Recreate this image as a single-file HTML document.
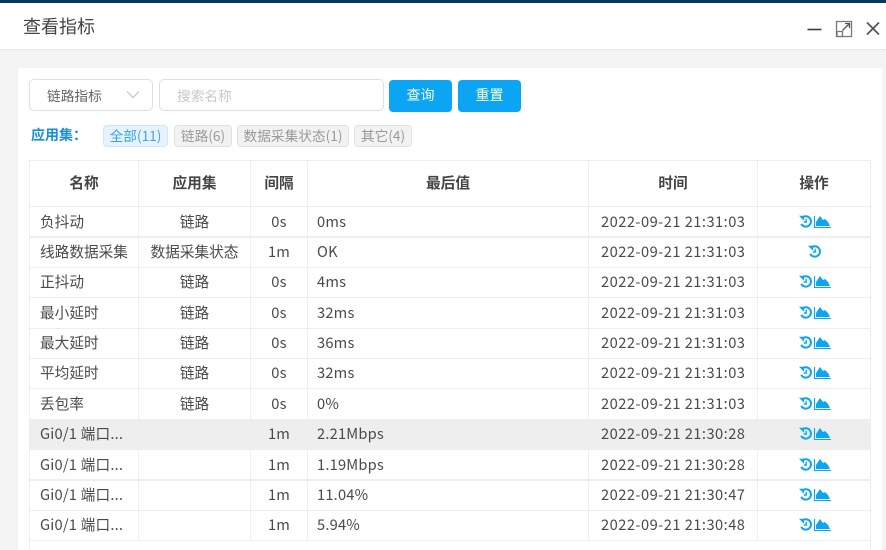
<!DOCTYPE html>
<html><head><meta charset="utf-8">
<style>
html,body{margin:0;padding:0}
body{width:886px;height:550px;overflow:hidden;position:relative;background:#f3f3f3;font-family:"Noto Sans CJK SC","Liberation Sans",sans-serif;color:#444}
.a{position:absolute}
.top{left:0;top:0;width:886px;height:3px;background:#033a5c}
.hd{left:0;top:3px;width:886px;height:46px;background:#fff;border-bottom:1px solid #e8e8e8}
.ti{left:23px;top:13px;font-size:18px;line-height:26px;color:#444}
.card{left:18px;top:68px;width:864px;height:482px;background:#fff}
.box{border:1px solid #dcdfe6;border-radius:5px;background:#fff;box-sizing:border-box}
.btn{background:#0ba5f3;border-radius:4px;color:#fff;font-size:14px;text-align:center;line-height:31px;width:63px;height:32px;top:80px}
.tag{top:125px;height:22px;line-height:18px;border:1px solid #e2e2e2;background:#f2f2f2;border-radius:4px;box-sizing:border-box;font-size:13.7px;color:#999;text-align:center;white-space:nowrap}
.h{background:#eee}
.t{white-space:nowrap;font-size:14.67px;line-height:20px;color:#4a4a4a}
.c{text-align:center}
.b{font-weight:700;font-size:14.67px;color:#444;margin-top:-1px}
.d{letter-spacing:.47px}
.v{letter-spacing:.2px}
svg{position:absolute;overflow:visible}
</style></head><body>
<div class="a top"></div>
<div class="a hd"></div>
<div class="a ti">查看指标</div>
<svg style="left:806px;top:20px" width="70" height="18" fill="none">
<path d="M1.500 9.500H15.500" stroke="#3a3a4a" stroke-width="1.600"/>
<path d="M30.500 1.500H45.500V16.500H30.500Z" stroke="#77777f" stroke-width="1.300"/>
<path d="M31 11.500H36.500V16.500H31Z" stroke="#77777f" stroke-width="1.300"/>
<path d="M36.500 10.500L43 4M39 3.500H43.500V8" stroke="#55555f" stroke-width="1.300"/>
<path d="M61 2.500L73 14.500M73 2.500L61 14.500" stroke="#55555f" stroke-width="1.800"/>
</svg>
<div class="a card"></div>
<div class="a box" style="left:29px;top:79px;width:124px;height:32px"></div>
<div class="a" style="left:47px;top:85px;font-size:13.7px;line-height:20px;color:#666">链路指标</div>
<svg style="left:126px;top:90px" width="14" height="10" fill="none"><path d="M1 1.500L7 7.500L13 1.500" stroke="#c0c4cc" stroke-width="1.200"/></svg>
<div class="a box" style="left:159px;top:79px;width:225px;height:32px"></div>
<div class="a" style="left:177px;top:85px;font-size:13.7px;line-height:20px;color:#c8c8c8">搜索名称</div>
<div class="a btn" style="left:389px">查询</div>
<div class="a btn" style="left:458px">重置</div>
<div class="a" style="left:31px;top:125px;font-size:14px;line-height:20px;font-weight:700;color:#1a8fd6">应用集：</div>
<div class="a tag" style="left:103px;width:65px;background:#e6f3fe;border-color:#cfe6fb;color:#3ba2f3">全部(11)</div>
<div class="a tag" style="left:174px;width:58px">链路(6)</div>
<div class="a tag" style="left:237px;width:112px">数据采集状态(1)</div>
<div class="a tag" style="left:354px;width:58px">其它(4)</div>

<!-- grid -->
<div class="a" style="left:30px;top:419px;width:840px;height:31px;background:#eee"></div>
<div class="a h" style="left:29px;top:160px;width:842px;height:1px"></div>
<div class="a h" style="left:29px;top:206px;width:842px;height:1px"></div>
<div class="a h" style="left:29px;top:236px;width:842px;height:2px"></div>
<div class="a h" style="left:29px;top:267px;width:842px;height:1px"></div>
<div class="a h" style="left:29px;top:297px;width:842px;height:1px"></div>
<div class="a h" style="left:29px;top:328px;width:842px;height:1px"></div>
<div class="a h" style="left:29px;top:358px;width:842px;height:1px"></div>
<div class="a h" style="left:29px;top:388px;width:842px;height:1px"></div>
<div class="a h" style="left:29px;top:479px;width:842px;height:2px"></div>
<div class="a h" style="left:29px;top:510px;width:842px;height:1px"></div>
<div class="a h" style="left:29px;top:540px;width:842px;height:1px"></div>
<div class="a h" style="left:29px;top:160px;width:1px;height:390px"></div>
<div class="a h" style="left:870px;top:160px;width:1px;height:390px"></div>
<div class="a h" style="left:138px;top:160px;width:1px;height:380px"></div>
<div class="a h" style="left:250px;top:160px;width:1px;height:380px"></div>
<div class="a h" style="left:307px;top:160px;width:1px;height:380px"></div>
<div class="a h" style="left:588px;top:160px;width:1px;height:380px"></div>
<div class="a h" style="left:757px;top:160px;width:1px;height:380px"></div>

<!-- header -->
<div class="a t c b" style="left:30px;width:108px;top:174px">名称</div>
<div class="a t c b" style="left:139px;width:111px;top:174px">应用集</div>
<div class="a t c b" style="left:251px;width:56px;top:174px">间隔</div>
<div class="a t c b" style="left:308px;width:280px;top:174px">最后值</div>
<div class="a t c b" style="left:589px;width:168px;top:174px">时间</div>
<div class="a t c b" style="left:758px;width:112px;top:174px">操作</div>

<!-- rows -->
<div class="a t" style="left:40px;top:212px">负抖动</div><div class="a t c" style="left:139px;width:111px;top:212px">链路</div><div class="a t c v" style="left:251px;width:56px;top:212px">0s</div><div class="a t v" style="left:317px;top:212px">0ms</div><div class="a t d" style="left:601px;top:212px">2022-09-21 21:31:03</div>
<div class="a t" style="left:40px;top:242px">线路数据采集</div><div class="a t c" style="left:139px;width:111px;top:242px">数据采集状态</div><div class="a t c v" style="left:251px;width:56px;top:242px">1m</div><div class="a t v" style="left:317px;top:242px">OK</div><div class="a t d" style="left:601px;top:242px">2022-09-21 21:31:03</div>
<div class="a t" style="left:40px;top:272px">正抖动</div><div class="a t c" style="left:139px;width:111px;top:272px">链路</div><div class="a t c v" style="left:251px;width:56px;top:272px">0s</div><div class="a t v" style="left:317px;top:272px">4ms</div><div class="a t d" style="left:601px;top:272px">2022-09-21 21:31:03</div>
<div class="a t" style="left:40px;top:303px">最小延时</div><div class="a t c" style="left:139px;width:111px;top:303px">链路</div><div class="a t c v" style="left:251px;width:56px;top:303px">0s</div><div class="a t v" style="left:317px;top:303px">32ms</div><div class="a t d" style="left:601px;top:303px">2022-09-21 21:31:03</div>
<div class="a t" style="left:40px;top:333px">最大延时</div><div class="a t c" style="left:139px;width:111px;top:333px">链路</div><div class="a t c v" style="left:251px;width:56px;top:333px">0s</div><div class="a t v" style="left:317px;top:333px">36ms</div><div class="a t d" style="left:601px;top:333px">2022-09-21 21:31:03</div>
<div class="a t" style="left:40px;top:363px">平均延时</div><div class="a t c" style="left:139px;width:111px;top:363px">链路</div><div class="a t c v" style="left:251px;width:56px;top:363px">0s</div><div class="a t v" style="left:317px;top:363px">32ms</div><div class="a t d" style="left:601px;top:363px">2022-09-21 21:31:03</div>
<div class="a t" style="left:40px;top:394px">丢包率</div><div class="a t c" style="left:139px;width:111px;top:394px">链路</div><div class="a t c v" style="left:251px;width:56px;top:394px">0s</div><div class="a t v" style="left:317px;top:394px">0%</div><div class="a t d" style="left:601px;top:394px">2022-09-21 21:31:03</div>
<div class="a t v" style="left:40px;top:424px">Gi0/1 端口...</div><div class="a t c v" style="left:251px;width:56px;top:424px">1m</div><div class="a t v" style="left:317px;top:424px">2.21Mbps</div><div class="a t d" style="left:601px;top:424px">2022-09-21 21:30:28</div>
<div class="a t v" style="left:40px;top:455px">Gi0/1 端口...</div><div class="a t c v" style="left:251px;width:56px;top:455px">1m</div><div class="a t v" style="left:317px;top:455px">1.19Mbps</div><div class="a t d" style="left:601px;top:455px">2022-09-21 21:30:28</div>
<div class="a t v" style="left:40px;top:485px">Gi0/1 端口...</div><div class="a t c v" style="left:251px;width:56px;top:485px">1m</div><div class="a t v" style="left:317px;top:485px">11.04%</div><div class="a t d" style="left:601px;top:485px">2022-09-21 21:30:47</div>
<div class="a t v" style="left:40px;top:515px">Gi0/1 端口...</div><div class="a t c v" style="left:251px;width:56px;top:515px">1m</div><div class="a t v" style="left:317px;top:515px">5.94%</div><div class="a t d" style="left:601px;top:515px">2022-09-21 21:30:48</div>

<!-- icons -->
<svg width="0" height="0" style="left:0;top:0"><defs>
<g id="hi" fill="none" stroke="#0ba5f3"><path d="M2.900 3A5.200 5.200 0 1 1 2.200 8.900" stroke-width="2"/><path d="M0 0.800L5 0.800L5 5.800Z" fill="#0ba5f3" stroke="none"/><path d="M7.200 3.800V7H4.800" stroke-width="1.400"/></g>
<g id="ch"><path d="M0.500 1V12.500H17" fill="none" stroke="#0ba5f3" stroke-width="1.100"/><path d="M2 11V7L6 1L9 5L11 4L14 7L16 11Z" fill="#0ba5f3"/></g>
</defs></svg>
<svg style="left:799px;top:215px" width="34" height="14"><use href="#hi"/><use href="#ch" x="15"/></svg>
<svg style="left:808px;top:245px" width="14" height="14"><use href="#hi"/></svg>
<svg style="left:799px;top:275px" width="34" height="14"><use href="#hi"/><use href="#ch" x="15"/></svg>
<svg style="left:799px;top:306px" width="34" height="14"><use href="#hi"/><use href="#ch" x="15"/></svg>
<svg style="left:799px;top:336px" width="34" height="14"><use href="#hi"/><use href="#ch" x="15"/></svg>
<svg style="left:799px;top:366px" width="34" height="14"><use href="#hi"/><use href="#ch" x="15"/></svg>
<svg style="left:799px;top:397px" width="34" height="14"><use href="#hi"/><use href="#ch" x="15"/></svg>
<svg style="left:799px;top:427px" width="34" height="14"><use href="#hi"/><use href="#ch" x="15"/></svg>
<svg style="left:799px;top:458px" width="34" height="14"><use href="#hi"/><use href="#ch" x="15"/></svg>
<svg style="left:799px;top:488px" width="34" height="14"><use href="#hi"/><use href="#ch" x="15"/></svg>
<svg style="left:799px;top:518px" width="34" height="14"><use href="#hi"/><use href="#ch" x="15"/></svg>
</body></html>
